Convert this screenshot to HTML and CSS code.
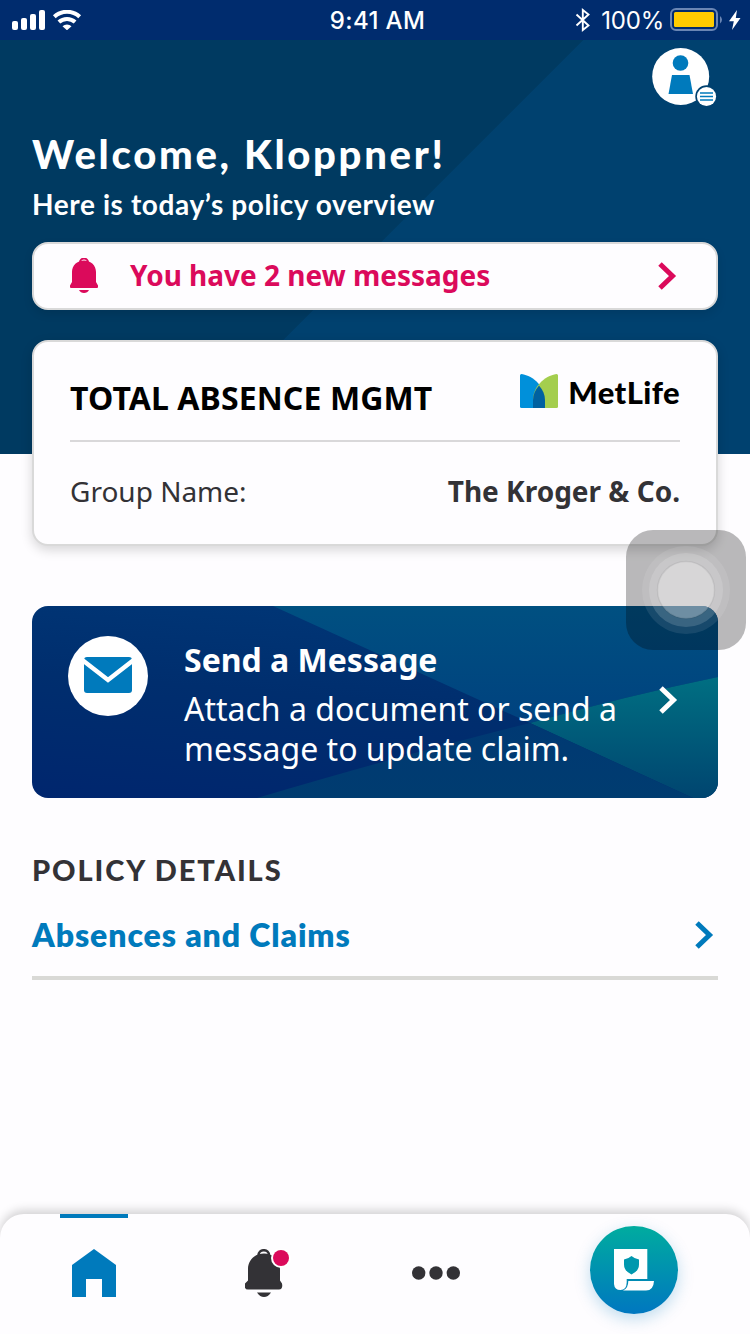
FILE: index.html
```html
<!DOCTYPE html>
<html lang="en">
<head>
<meta charset="utf-8">
<title>Policy overview</title>
<link rel="stylesheet" href="styles.css">
</head>
<body>
<div class="screen">
  <header class="status">
    <div class="status-left">
      <svg width="70" height="20" viewBox="0 0 70 20" fill="#fff">
        <rect x="0" y="11" width="6" height="9" rx="2"/>
        <rect x="9" y="8" width="6" height="12" rx="2"/>
        <rect x="18" y="4" width="6" height="16" rx="2"/>
        <rect x="27" y="0" width="6" height="20" rx="2"/>
        <g fill="none" stroke="#fff" stroke-width="4">
          <path d="M42.300 6.800a18.500 18.500 0 0 1 25.400 0"/>
          <path d="M46.900 12.100a12 12 0 0 1 16.200 0"/>
        </g>
        <path d="M50.500 16.200a6.600 6.600 0 0 1 9 0L55 20.300z"/>
      </svg>
    </div>
    <time class="clock">9:41 AM</time>
    <div class="status-right">
      <svg width="16" height="24" viewBox="0 0 16 24" fill="none" stroke="#fff" stroke-width="1.900"><path d="M1.500 6.500l12 11L7.800 22V2l5.700 4.500-12 11"/></svg>
      <span class="percent">100%</span>
      <svg class="battery" width="53" height="24" viewBox="0 0 53 24">
        <rect x="1" y="1" width="46" height="21" rx="5" fill="none" stroke="#6a86b4" stroke-width="2"/>
        <rect x="4" y="4" width="40" height="15" rx="1.500" fill="#fc0"/>
        <path d="M50 8q4 3.500 0 7.500z" fill="#6a86b4"/>
      </svg>
      <svg width="12" height="20" viewBox="0 0 12 20" fill="#fff"><path d="M8 0L0 11.200h4.800L3 20l8.500-12H6.800z"/></svg>
    </div>
  </header>

  <main class="content">
    <div class="profile">
      <svg width="66" height="60" viewBox="0 0 66 60">
        <circle cx="28.700" cy="28.500" r="28.500" fill="#fff"/>
        <circle cx="28.500" cy="15" r="7.800" fill="#007abc"/>
        <path d="M20 27h17.500l3.500 19H16.500z" fill="#007abc"/>
        <circle cx="54.500" cy="48.500" r="11.200" fill="#00416f"/>
        <circle cx="54.500" cy="48.500" r="9.600" fill="#fff"/>
        <path d="M48 45h13M48 48.500h13M48 52h13" stroke="#007abc" stroke-width="1.500"/>
      </svg>
    </div>
    <h1 class="welcome">Welcome, Kloppner!</h1>
    <p class="subtitle">Here is today’s policy overview</p>

    <a class="alert">
      <svg width="28" height="36" viewBox="0 0 28 36">
        <path d="M10 4.500a4 4 0 0 1 8 0" fill="none" stroke="#db0a5b" stroke-width="2"/>
        <path d="M14 2.500C21 2.500 26 7.500 26 14v10l2 3.500V29a1 1 0 0 1-1 1H1a1 1 0 0 1-1-1v-1.500L2 24V14C2 7.500 7 2.500 14 2.500z" fill="#db0a5b"/>
        <path d="M9 32h10q-1.500 3-5 3t-5-3z" fill="#db0a5b"/>
      </svg>
      <span class="alert-text">You have 2 new messages</span>
      <svg width="20" height="28" viewBox="0 0 20 28" fill="none" stroke="#db0a5b" stroke-width="5"><path d="M2 2l12.500 12L2 26"/></svg>
    </a>

    <section class="policy">
      <div class="policy-head">
        <h2 class="policy-title">TOTAL ABSENCE MGMT</h2>
        <div class="brand">
          <svg width="38" height="34" viewBox="0 0 38 34">
            <path d="M0 1.500Q0 0 1.500 0C14 2 25 13 25 26v8H1.500Q0 34 0 32.500z" fill="#0090da"/>
            <path d="M38 1.500Q38 0 36.500 0C24 2 13 13 13 26v8h23.500q1.500 0 1.500-1.500z" fill="#a4ce4e"/>
            <path d="M19 11.500C23 16 25 21 25 26v8H13v-8c0-5 2-10 6-14.500z" fill="#0061a0"/>
          </svg>
          <span class="brand-name">MetLife</span>
        </div>
      </div>
      <div class="policy-row">
        <span class="label">Group Name:</span>
        <span class="value">The Kroger &amp; Co.</span>
      </div>
    </section>

    <a class="send">
      <svg class="send-bg" width="686" height="192" viewBox="0 0 686 192">
        <defs>
          <linearGradient id="navy" x1="0.300" y1="0" x2="0" y2="1"><stop offset="0" stop-color="#003575"/><stop offset=".4" stop-color="#002e6e"/><stop offset="1" stop-color="#00266e"/></linearGradient>
          <linearGradient id="sky" x1="0" y1="0" x2="0" y2="1"><stop offset="0" stop-color="#005081"/><stop offset="1" stop-color="#00427f"/></linearGradient>
          <linearGradient id="teal" x1="0" y1="0" x2="0" y2="1"><stop offset="0" stop-color="#006f82"/><stop offset="1" stop-color="#004570"/></linearGradient>
          <linearGradient id="deep" x1="0" y1="0" x2="0" y2="1"><stop offset="0" stop-color="#003973"/><stop offset="1" stop-color="#003c70"/></linearGradient>
        </defs>
        <rect width="686" height="192" fill="url(#navy)"/>
        <path d="M241 0H686V71Q594 90 498 117z" fill="url(#sky)"/>
        <path d="M686 71V192H661L498 117Q594 90 686 71z" fill="url(#teal)"/>
        <path d="M498 117L661 192H225Q370 149 498 117z" fill="url(#deep)"/>
      </svg>
      <div class="send-body">
        <svg width="80" height="80" viewBox="0 0 80 80">
          <circle cx="40" cy="40" r="40" fill="#fff"/>
          <rect x="16" y="21" width="48" height="36" rx="3" fill="#007abc"/>
          <path d="M14 23.800L40 44 66 23.800" fill="none" stroke="#fff" stroke-width="4.500"/>
        </svg>
        <div class="send-text">
          <h3 class="send-title">Send a Message</h3>
          <p class="send-desc">Attach a document or send a message to update claim.</p>
        </div>
        <svg class="send-arrow" width="20" height="28" viewBox="0 0 20 28" fill="none" stroke="#fff" stroke-width="5"><path d="M2 2l12.500 12L2 26"/></svg>
      </div>
    </a>

    <h2 class="details">POLICY DETAILS</h2>
    <a class="detail-link">
      <span>Absences and Claims</span>
      <svg width="20" height="28" viewBox="0 0 20 28" fill="none" stroke="#007abc" stroke-width="5"><path d="M2 2l12.500 12L2 26"/></svg>
    </a>
  </main>

  <nav class="tabs">
    <a class="tab tab-home">
      <svg width="44" height="48" viewBox="0 0 44 48"><path d="M22 0L44 16V48H30V30H14V48H0V16z" fill="#007abc"/></svg>
    </a>
    <a class="tab tab-bell">
      <svg width="46" height="48" viewBox="0 0 46 48">
        <path d="M13.500 6.500a5.300 5.300 0 0 1 10.600 0" fill="none" stroke="#333236" stroke-width="2.500"/>
        <path d="M19 4.500C28 4.500 35 11 35 20v11.500l2 3q1.200 6-3 6H3q-4.200 0-3-6l3-3V20C3 11 10 4.500 19 4.500z" fill="#333236"/>
        <path d="M12 43.500h14q-3 4.500-7 4.500t-7-4.500z" fill="#333236"/>
        <circle cx="36" cy="9" r="10" fill="#fff"/>
        <circle cx="36" cy="9" r="8" fill="#db0a5b"/>
      </svg>
    </a>
    <a class="tab tab-more">
      <svg width="48" height="14" viewBox="0 0 48 14" fill="#333236"><circle cx="6.700" cy="7" r="6.700"/><circle cx="24" cy="7" r="6.700"/><circle cx="41.300" cy="7" r="6.700"/></svg>
    </a>
    <a class="claim">
      <svg width="40" height="42" viewBox="0 0 40 42">
        <path d="M0 0H33.300V30H12.700V33.500Q12.500 41 6.500 41T0 35z" fill="#fff"/>
        <path d="M14.300 32H40Q39.500 41.500 32 41.500H9Q14.300 39.500 14.300 32z" fill="#fff"/>
        <path d="M17.500 7q3.500 3 7.500 3.500v5q0 6.500-7.500 10Q10 22 10 15.500v-5q4-.5 7.500-3.500z" fill="#0098ae"/>
      </svg>
    </a>
  </nav>

  <div class="assist">
    <svg width="120" height="120" viewBox="0 0 120 120">
      <circle cx="60" cy="60" r="44" fill="#fff" fill-opacity=".09"/>
      <circle cx="60" cy="60" r="37" fill="#fff" fill-opacity=".15"/>
      <circle cx="60" cy="60" r="28.500" fill="#fff" fill-opacity=".27" stroke="#000" stroke-opacity=".06" stroke-width="1.500"/>
    </svg>
  </div>
</div>
</body>
</html>
```

FILE: styles.css
```css
* { box-sizing: border-box; margin: 0; padding: 0; }

body { background: #fefdff; font-family: "Noto Sans", sans-serif; }

svg { display: block; flex: none; }

.screen {
  position: relative;
  display: flex;
  flex-direction: column;
  width: 750px;
  height: 1334px;
  overflow: hidden;
  background: #fefdff;
}

.status {
  display: grid;
  grid-template-columns: 1fr auto 1fr;
  align-items: center;
  height: 40px;
  padding: 0 9px 0 12px;
  background: #002c6e;
  color: #fff;
  font-family: Inter, sans-serif;
}
.clock { padding-left: 2px; font-size: 24px; font-weight: 500; letter-spacing: 0.4px; }
.status-right { display: flex; align-items: center; justify-content: flex-end; }
.percent { margin: 0 6px 0 10px; font-size: 24px; font-weight: 400; letter-spacing: -0.2px; }
.battery { margin-right: 6px; }

.content {
  flex: 1;
  padding: 8px 32px 0;
  background: linear-gradient(135deg, #003a61 412px, #00416f 413px) 0 0 / 100% 414px no-repeat;
}
.profile { display: flex; justify-content: flex-end; }

.welcome {
  margin-top: 23px;
  color: #fff;
  font: 900 40px/46px Lato, sans-serif;
  letter-spacing: 2.7px;
  white-space: nowrap;
}
.subtitle {
  margin-top: 11px;
  color: #fff;
  font: 700 28px/32px Lato, sans-serif;
  letter-spacing: 0.6px;
  white-space: nowrap;
}

.alert {
  display: flex;
  align-items: center;
  height: 68px;
  margin-top: 22px;
  padding: 0 38px 0 36px;
  border: 2px solid #d9d9d9;
  border-radius: 16px;
  background: #fefdff;
  box-shadow: 0 4px 10px rgba(0, 0, 0, 0.1);
  color: #db0a5b;
}
.alert-text { flex: 1; margin-left: 32px; padding-bottom: 2px; font-size: 28px; font-weight: 700; white-space: nowrap; }

.policy {
  height: 206px;
  margin-top: 30px;
  padding: 0 36px;
  border: 2px solid #d9d9d9;
  border-radius: 16px;
  background: #fefdff;
  box-shadow: 0 4px 12px rgba(0, 0, 0, 0.16);
}
.policy-head {
  display: flex;
  align-items: flex-start;
  justify-content: space-between;
  height: 100px;
  border-bottom: 2px solid #d9d8da;
}
.policy-title { margin-top: 34px; color: #000; font-size: 32px; line-height: 44px; letter-spacing: 0.1px; white-space: nowrap; }
.brand { display: flex; align-items: center; gap: 10px; height: 34px; margin-top: 32px; }
.brand-name { padding-top: 1px; color: #000; font: 900 31px/34px Lato, sans-serif; letter-spacing: 0.4px; }
.policy-row {
  display: flex;
  align-items: center;
  justify-content: space-between;
  height: 98px;
  color: #333236;
  font-size: 28px;
}
.value { font-weight: 700; }

.send {
  display: grid;
  height: 192px;
  margin-top: 60px;
  overflow: hidden;
  border-radius: 16px;
  color: #fff;
}
.send-bg, .send-body { grid-area: 1 / 1; }
.send-body { display: flex; align-items: flex-start; padding: 30px 39px 0 36px; }
.send-text { flex: 1; margin-left: 36px; }
.send-title { font-size: 32px; line-height: 48px; }
.send-desc { width: 450px; margin-top: 5px; font-size: 32px; line-height: 40px; }
.send-arrow { margin: 50px 0 0 -8px; }

.details {
  margin-top: 56px;
  color: #333236;
  font: 900 29px/32px Lato, sans-serif;
  letter-spacing: 1.9px;
}
.detail-link {
  display: flex;
  align-items: center;
  justify-content: space-between;
  height: 94px;
  padding: 8px 3px 0 0;
  border-bottom: 4px solid #d9d9d6;
  color: #007abc;
  font: 800 32px/40px Lato, sans-serif;
  letter-spacing: 0.9px;
}

.tabs {
  display: flex;
  align-items: flex-start;
  height: 120px;
  padding-left: 60px;
  border-radius: 24px 24px 0 0;
  background: #fefdff;
  box-shadow: 0 -4px 10px rgba(0, 0, 0, 0.17);
}
.tab-home { padding: 31px 12px 0; border-top: 4px solid #007abc; }
.tab-bell { margin-left: 117px; padding-top: 35px; }
.tab-more { margin-left: 121px; padding-top: 52px; }
.claim {
  display: flex;
  width: 88px;
  height: 88px;
  margin: 12px 0 0 130px;
  padding: 23px 0 0 24px;
  border-radius: 50%;
  background: linear-gradient(#00ac9f, #0077c0);
  box-shadow: 0 5px 16px rgba(0, 122, 188, 0.25);
}

.assist {
  position: absolute;
  left: 626px;
  top: 530px;
  width: 120px;
  height: 120px;
  border-radius: 27px;
  background: rgba(0, 0, 0, 0.27);
}
```
